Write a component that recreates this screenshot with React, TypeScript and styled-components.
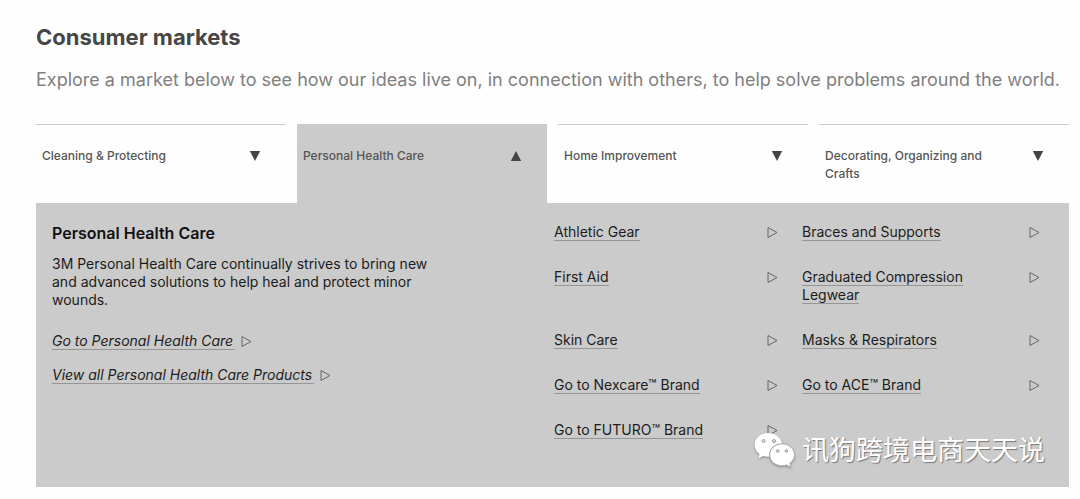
import React from "react";
import styled, { createGlobalStyle } from "styled-components";

const GlobalStyle = createGlobalStyle`
  * { box-sizing: border-box; }
  body {
    margin: 0;
    background: #fefefe;
    font-family: Inter, "Liberation Sans", sans-serif;
  }
`;

const Page = styled.main`
  padding: 23px 11px 12px 36px;
`;

const Title = styled.h1`
  margin: 0;
  color: #464646;
  font-size: 22px;
  font-weight: 700;
  line-height: 28px;
`;

const Lead = styled.p`
  margin: 15px 0 30px;
  color: #808080;
  font-size: 18px;
  font-weight: 400;
  line-height: 28px;
`;

const Tabs = styled.div`
  display: grid;
  grid-template-columns: repeat(4, 1fr);
  gap: 11px;
`;

const Tab = styled.button<{ $active?: boolean }>`
  display: flex;
  justify-content: space-between;
  align-items: flex-start;
  min-height: 79px;
  padding: 22px 25px 18px 6px;
  border: 0;
  border-top: 1px solid #cbcbcb;
  background: ${(p) => (p.$active ? "#cbcbcb" : "transparent")};
  color: #555;
  font-family: inherit;
  font-size: 12px;
  font-weight: 500;
  line-height: 18px;
  text-align: left;
  cursor: pointer;
`;

const TabLabel = styled.span`
  max-width: 180px;
`;

const Caret = styled.svg<{ $up?: boolean }>`
  flex: none;
  width: 12px;
  height: 18px;
  fill: #444;
  transform: ${(p) => (p.$up ? "rotate(180deg)" : "none")};
`;

const Panel = styled.section`
  position: relative;
  display: grid;
  grid-template-columns: 478fr 486fr;
  column-gap: 24px;
  padding: 20px 29px 48px 16px;
  background: #cbcbcb;
  color: #1c1c1c;
  font-size: 14px;
  line-height: 18px;
`;

const PanelTitle = styled.h2`
  margin: 0 0 12px;
  color: #111;
  font-size: 16px;
  font-weight: 600;
  line-height: 20px;
`;

const Intro = styled.p`
  max-width: 400px;
  margin: 0 0 23px;
`;

const MoreLinks = styled.div`
  display: flex;
  flex-direction: column;
  align-items: flex-start;
  gap: 16px;
  font-style: italic;
`;

const MoreRow = styled.div`
  display: flex;
  gap: 6px;
`;

const Link = styled.a`
  border-bottom: 1px solid #969696;
  color: inherit;
  text-decoration: none;
`;

const MoreLink = styled(Link)`
  padding-right: 2px;
  line-height: 17px;
`;

const LinkGrid = styled.ul`
  display: grid;
  grid-template-columns: 224fr 238fr;
  gap: 27px 24px;
  align-content: start;
  margin: 0;
  padding: 0;
  list-style: none;
`;

const LinkItem = styled.li`
  display: flex;
  justify-content: space-between;
  align-items: flex-start;
`;

const LinkText = styled.span`
  max-width: 190px;
`;

const ArrowIcon = styled.svg`
  flex: none;
  width: 11px;
  height: 18px;
  fill: none;
  stroke: #666;
`;

const Watermark = styled.div`
  position: absolute;
  right: 24px;
  bottom: 16px;
  display: flex;
  align-items: center;
  gap: 7px;
  color: #fff;
  font-family: Inter, "Noto Sans CJK SC", sans-serif;
  font-size: 27px;
  line-height: 40px;
  text-shadow: 1px 1px 1px #777;
`;

const ChatLogo = styled.svg`
  width: 41px;
  height: 38px;
  filter: drop-shadow(0 1px 1px #888);
`;

const tabs = [
  { label: "Cleaning & Protecting" },
  { label: "Personal Health Care", active: true },
  { label: "Home Improvement" },
  { label: "Decorating, Organizing and Crafts" },
];

const links = [
  "Athletic Gear",
  "Braces and Supports",
  "First Aid",
  "Graduated Compression Legwear",
  "Skin Care",
  "Masks & Respirators",
  "Go to Nexcare™ Brand",
  "Go to ACE™ Brand",
  "Go to FUTURO™ Brand",
];

const Arrow = () => (
  <ArrowIcon viewBox="0 0 11 18" aria-hidden="true">
    <path d="M1 4.500 L10 9.500 L1 14.500 Z" />
  </ArrowIcon>
);

export default function App() {
  return (
    <>
      <GlobalStyle />
      <Page>
        <Title>Consumer markets</Title>
        <Lead>
          Explore a market below to see how our ideas live on, in connection with others, to help solve problems around the world.
        </Lead>
        <Tabs>
          {tabs.map((tab) => (
            <Tab key={tab.label} type="button" $active={tab.active} aria-expanded={!!tab.active}>
              <TabLabel>{tab.label}</TabLabel>
              <Caret $up={tab.active} viewBox="0 0 12 18" aria-hidden="true">
                <path d="M0.8 4 H11.2 L6 14 Z" />
              </Caret>
            </Tab>
          ))}
        </Tabs>
        <Panel>
          <div>
            <PanelTitle>Personal Health Care</PanelTitle>
            <Intro>
              3M Personal Health Care continually strives to bring new and advanced solutions to help heal and protect minor wounds.
            </Intro>
            <MoreLinks>
              {["Go to Personal Health Care", "View all Personal Health Care Products"].map((text) => (
                <MoreRow key={text}>
                  <MoreLink href="#">{text}</MoreLink>
                  <Arrow />
                </MoreRow>
              ))}
            </MoreLinks>
          </div>
          <LinkGrid>
            {links.map((text) => (
              <LinkItem key={text}>
                <LinkText>
                  <Link href="#">{text}</Link>
                </LinkText>
                <Arrow />
              </LinkItem>
            ))}
          </LinkGrid>
          <Watermark>
            <ChatLogo viewBox="0 0 43 40" aria-hidden="true">
              <path
                fill="#fff"
                d="M15 1C6.700 1 0.500 6.500 0.500 13.500c0 4 2 7.300 5.300 9.800L4.500 28l5.200-2.700c2 .6 4 .9 6.300.8C15 18 21 12 29.500 12 28 5.500 22 1 15 1Z"
              />
              <path
                fill="#fff"
                stroke="#aaa"
                strokeWidth="0.8"
                d="M29.300 12.500C22 12.500 16.500 17.500 16.500 24S22 35.500 29.300 35.500c1.800 0 3.400-.3 5-.9l4.500 2.700-1.200-4.300c3-2.200 4.900-5.300 4.900-9 0-6.500-6-11.500-13.200-11.500Z"
              />
              <g fill="#ddd" stroke="#888" strokeWidth="0.8">
                <circle cx="10" cy="9.500" r="1.600" />
                <circle cx="21" cy="9.500" r="1.600" />
                <circle cx="25" cy="20" r="1.400" />
                <circle cx="34" cy="20" r="1.400" />
              </g>
            </ChatLogo>
            讯狗跨境电商天天说
          </Watermark>
        </Panel>
      </Page>
    </>
  );
}
